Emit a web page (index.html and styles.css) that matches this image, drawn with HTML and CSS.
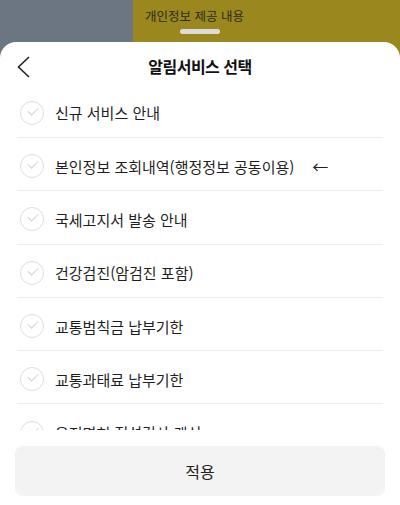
FILE: index.html
```html
<!DOCTYPE html>
<html lang="ko">

<head>
    <meta charset="UTF-8">
    <meta name="viewport" content="width=device-width, initial-scale=1.0">
    <title>알림서비스 선택</title>
    <link rel="stylesheet" href="styles.css">
</head>

<body>
    <div class="backdrop">
        <div class="backdrop-side"></div>
        <div class="backdrop-main">
            <div class="backdrop-title">개인정보 제공 내용</div>
            <div class="handle"></div>
        </div>
    </div>

    <div class="sheet">
        <div class="sheet-header">
            <button class="back-btn" aria-label="뒤로">
                <svg width="14" height="22" viewBox="0 0 14 22">
                    <polyline points="12,1 1.5,11 12,21" fill="none" stroke="#222" stroke-width="1.6" stroke-linejoin="miter" />
                </svg>
            </button>
            <h1 class="sheet-title">알림서비스 선택</h1>
        </div>

        <ul class="option-list">
            <li class="option"><span class="check"></span>신규 서비스 안내</li>
            <li class="option"><span class="check"></span>본인정보 조회내역(행정정보 공동이용)<span class="arrow">←</span></li>
            <li class="option"><span class="check"></span>국세고지서 발송 안내</li>
            <li class="option"><span class="check"></span>건강검진(암검진 포함)</li>
            <li class="option"><span class="check"></span>교통범칙금 납부기한</li>
            <li class="option"><span class="check"></span>교통과태료 납부기한</li>
            <li class="option"><span class="check"></span>운전면허 적성검사 갱신</li>
        </ul>

        <div class="sheet-footer">
            <button class="apply-btn">적용</button>
        </div>
    </div>
</body>

</html>
```

FILE: styles.css
```css
* {
    box-sizing: border-box;
}

html,
body {
    margin: 0;
    height: 505px;
    overflow: hidden;
}

body {
    font-family: "Noto Sans CJK KR", "Noto Sans", sans-serif;
    color: #222;
    display: flex;
    flex-direction: column;
    background: linear-gradient(to right, #6c7682 133px, #9a881f 133px);
}

.backdrop {
    height: 58px;
    display: flex;
    flex-shrink: 0;
}

.backdrop-side {
    width: 133px;
}

.backdrop-main {
    flex: 1;
    padding: 6px 0 0 12px;
    position: relative;
}

.backdrop-title {
    font-size: 12.5px;
    line-height: 20px;
    color: #2b2a1c;
}

.handle {
    position: absolute;
    left: 47px;
    top: 29px;
    width: 40px;
    height: 5px;
    border-radius: 3px;
    background: #dcdcdc;
}

.sheet {
    margin-top: -16px;
    flex: 1;
    background: #fff;
    border-radius: 16px 16px 0 0;
    display: flex;
    flex-direction: column;
    min-height: 0;
}

.sheet-header {
    height: 42.7px;
    padding-top: 5px;
    display: flex;
    align-items: center;
    justify-content: center;
    position: relative;
    flex-shrink: 0;
}

.back-btn {
    position: absolute;
    left: 17px;
    top: 14px;
    padding: 0;
    border: none;
    background: none;
    display: flex;
}

.sheet-title {
    margin: 0;
    font-size: 16px;
    font-weight: 700;
    letter-spacing: -0.5px;
    color: #111;
}

.option-list {
    list-style: none;
    margin: 0;
    padding: 0 17px;
    height: 345px;
    overflow: hidden;
    flex-shrink: 0;
}

.option {
    height: 53.3px;
    padding-top: 4px;
    display: flex;
    align-items: center;
    gap: 11px;
    font-size: 15px;
    color: #1e1e1e;
    border-bottom: 1px solid #efefef;
}

.check {
    width: 24px;
    height: 24px;
    margin-left: 3px;
    border: 1.5px solid #dedede;
    border-radius: 50%;
    position: relative;
    flex-shrink: 0;
}

.check::after {
    content: "";
    position: absolute;
    left: 6.5px;
    top: 5px;
    width: 9px;
    height: 5px;
    border-left: 1.5px solid #d4d4d4;
    border-bottom: 1.5px solid #d4d4d4;
    transform: rotate(-45deg);
}

.arrow {
    margin-left: 7px;
    font-size: 16px;
    color: #222;
}

.sheet-footer {
    padding: 16px 15px 9px;
}

.apply-btn {
    width: 100%;
    height: 50px;
    border: none;
    border-radius: 8px;
    background: #f3f3f3;
    font-family: inherit;
    font-size: 16px;
    color: #222;
}
```
